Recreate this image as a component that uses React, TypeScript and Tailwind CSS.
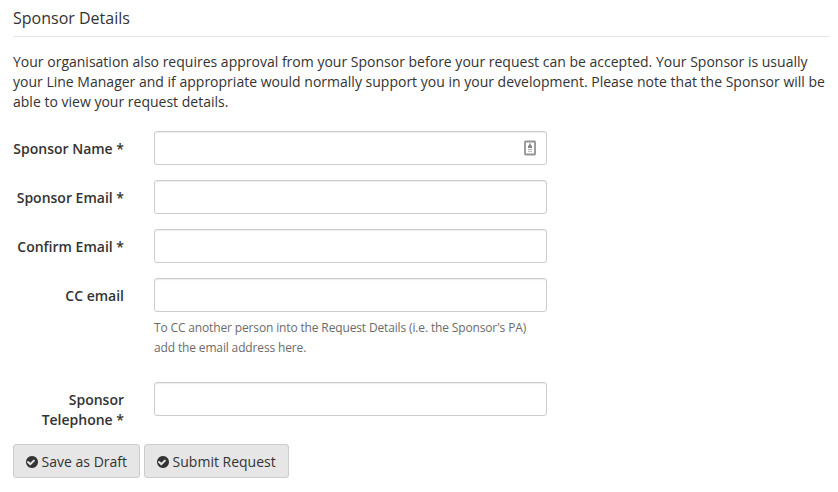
type Field = {
  id: string;
  label: string;
  type?: string;
  help?: string;
  contact?: boolean;
};

const fields: Field[] = [
  { id: "sponsor-name", label: "Sponsor Name *", contact: true },
  { id: "sponsor-email", label: "Sponsor Email *", type: "email" },
  { id: "confirm-email", label: "Confirm Email *", type: "email" },
  {
    id: "cc-email",
    label: "CC email",
    type: "email",
    help: "To CC another person into the Request Details (i.e. the Sponsor's PA) add the email address here.",
  },
  { id: "sponsor-telephone", label: "Sponsor Telephone *", type: "tel" },
];

function ContactIcon() {
  return (
    <svg
      className="pointer-events-none absolute top-[9px] right-[11px] h-4 w-3"
      viewBox="0 0 12 16"
      fill="none"
    >
      <rect x="1" y="1.5" width="10" height="13" rx="0.5" stroke="#939393" strokeWidth="1.8" />
      <path d="M5.2 3.5h1.6v2H8V8H4V5.5h1.2z" fill="#858585" />
      <path d="M4 9.5h4M4 11.3h4" stroke="#b5b5b5" />
    </svg>
  );
}

function CheckCircleIcon() {
  return (
    <svg className="size-3" viewBox="128 128 1536 1536" fill="currentColor">
      <path d="M1284 734q0-28-18-46l-91-90q-19-19-45-19t-45 19l-408 407-226-226q-19-19-45-19t-45 19l-91 90q-18 18-18 46 0 27 18 45l362 362q19 19 45 19 27 0 46-19l543-543q18-18 18-45zm380 162q0 209-103 385.5t-279.5 279.5-385.5 103-385.5-103-279.5-279.5-103-385.5 103-385.5 279.5-279.5 385.5-103 385.5 103 279.5 279.5 103 385.5z" />
    </svg>
  );
}

function FormRow({ field }: { field: Field }) {
  return (
    <div className="mb-[15px] flex last-of-type:mb-0">
      <label htmlFor={field.id} className="w-[111px] shrink-0 pt-2 text-right font-semibold">
        {field.label}
      </label>
      <div className="ml-[30px] w-[393px]">
        <div className="relative">
          <input
            id={field.id}
            type={field.type ?? "text"}
            className="block h-[34px] w-full rounded-[3px] border border-[#ccc] bg-white px-3 shadow-[inset_0_1px_1px_rgba(0,0,0,0.075)] outline-none"
          />
          {field.contact && <ContactIcon />}
        </div>
        {field.help && (
          <p className="mt-[6px] mb-[9px] text-[12px] tracking-[-0.145px] text-[#6b6b6b]">
            {field.help}
          </p>
        )}
      </div>
    </div>
  );
}

function ActionButton({ children }: { children: string }) {
  return (
    <button
      type="button"
      className="flex h-[34px] items-center gap-[3.6px] rounded-[3px] border border-[#ccc] bg-[#e6e6e6] px-3 pt-[2px]"
    >
      <CheckCircleIcon />
      {children}
    </button>
  );
}

export default function App() {
  return (
    <main className="h-[492px] w-[838px] overflow-hidden bg-white pt-2 pr-[9px] pl-[13px] font-['Open_Sans',sans-serif] text-[14px] leading-5 text-[#333]">
      <h2 className="mb-[15px] h-[29px] border-b border-[#e5e5e5] text-[16px]">Sponsor Details</h2>
      <p className="mb-[19px] tracking-[0.006px]">
        Your organisation also requires approval from your Sponsor before your request can be
        accepted. Your Sponsor is usually your Line Manager and if appropriate would normally
        support you in your development. Please note that the Sponsor will be able to view your
        request details.
      </p>
      <form>
        <div>
          {fields.map((field) => (
            <FormRow key={field.id} field={field} />
          ))}
        </div>
        <div className="mt-[14px] flex gap-1">
          <ActionButton>Save as Draft</ActionButton>
          <ActionButton>Submit Request</ActionButton>
        </div>
      </form>
    </main>
  );
}
